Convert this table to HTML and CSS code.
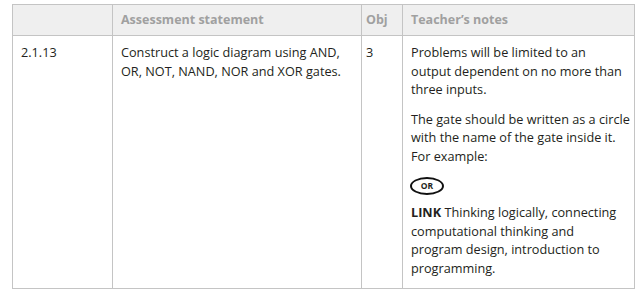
FILE: index.html
```html
<!DOCTYPE html>
<html>
<head>
<meta charset="utf-8">
<link rel="stylesheet" href="styles.css">
</head>
<body>
<div class="page">
  <table class="syllabus">
    <colgroup>
      <col class="c-ref">
      <col class="c-stmt">
      <col class="c-obj">
      <col class="c-notes">
    </colgroup>
    <thead>
      <tr>
        <th></th>
        <th>Assessment statement</th>
        <th class="obj">Obj</th>
        <th>Teacher’s notes</th>
      </tr>
    </thead>
    <tbody>
      <tr>
        <td>2.1.13</td>
        <td>Construct a logic diagram using AND,<br>OR, NOT, NAND, NOR and XOR gates.</td>
        <td class="obj">3</td>
        <td>
          <p class="para">Problems will be limited to an<br>output dependent on no more than<br>three inputs.</p>
          <p>The gate should be written as a circle<br>with the name of the gate inside it.<br>For example:</p>
          <div class="gate">OR</div>
          <p><b>LINK</b> Thinking logically, connecting<br>computational thinking and<br>program design, introduction to<br>programming.</p>
        </td>
      </tr>
    </tbody>
  </table>
</div>
</body>
</html>
```
FILE: styles.css
```css
html, body {
  margin: 0;
  padding: 0;
  background: #fff;
}
.page {
  padding: 4px 0 0 12px;
}
.syllabus {
  border-collapse: collapse;
  width: 622px;
  table-layout: fixed;
  font-family: "Open Sans", "Noto Sans", sans-serif;
  font-size: 12.7px;
  line-height: 18.5px;
  color: #231f20;
}
.c-ref { width: 100px; }
.c-stmt { width: 249px; }
.c-obj { width: 41px; }
.c-notes { width: 232px; }
.syllabus th, .syllabus td {
  border: 1px solid #c4c4c4;
  text-align: left;
  vertical-align: top;
  white-space: nowrap;
}
.syllabus th {
  background: #efefef;
  color: #a0a0a0;
  font-weight: 700;
  font-size: 12.5px;
  height: 30px;
  padding: 0 8px;
  vertical-align: middle;
}
.syllabus td {
  padding: 7px 4px 10px 8px;
  height: 235px;
}
.syllabus .obj {
  padding-left: 4px;
  padding-right: 4px;
}
.syllabus p {
  margin: 0;
}
.syllabus p.para {
  margin-bottom: 11px;
}
.gate {
  width: 30px;
  height: 14px;
  border: 2px solid #111;
  border-radius: 50%;
  font-size: 8.5px;
  line-height: 14px;
  font-weight: 700;
  text-align: center;
  margin: 12px 0 8px -1px;
}
```
